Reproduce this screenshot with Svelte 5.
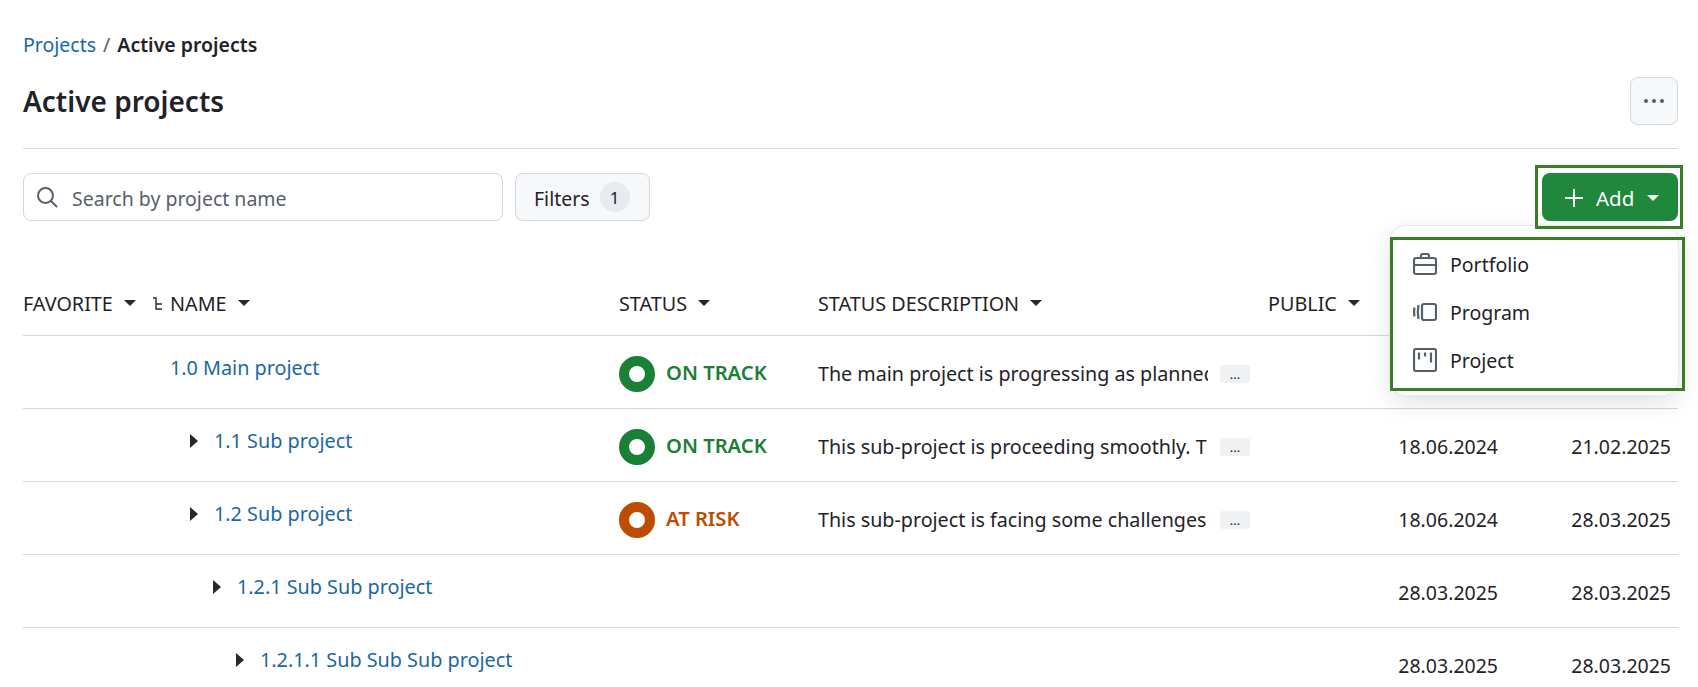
<script>
  const rows = [
    { name: "1.0 Main project", depth: 0, leaf: true, status: "ON TRACK", kind: "ok", desc: "The main project is progressing as planned", start: "", end: "" },
    { name: "1.1 Sub project", depth: 1, status: "ON TRACK", kind: "ok", desc: "This sub-project is proceeding smoothly. The team", start: "18.06.2024", end: "21.02.2025" },
    { name: "1.2 Sub project", depth: 1, status: "AT RISK", kind: "risk", desc: "This sub-project is facing some challenges that", start: "18.06.2024", end: "28.03.2025" },
    { name: "1.2.1 Sub Sub project", depth: 2, status: "", kind: "", desc: "", start: "28.03.2025", end: "28.03.2025" },
    { name: "1.2.1.1 Sub Sub Sub project", depth: 3, status: "", kind: "", desc: "", start: "28.03.2025", end: "28.03.2025" },
  ];
  const headers = [
    { label: "STATUS" },
    { label: "STATUS DESCRIPTION" },
    { label: "PUBLIC" },
  ];
</script>

<div class="page">
  <nav class="crumbs">
    <a href="#projects">Projects</a>
    <span class="sep">/</span>
    <strong>Active projects</strong>
  </nav>

  <header class="title-bar">
    <h1>Active projects</h1>
    <button class="more" aria-label="More">
      <svg width="22" height="6" viewBox="0 0 22 6"><circle cx="3" cy="3" r="2"/><circle cx="11" cy="3" r="2"/><circle cx="19" cy="3" r="2"/></svg>
    </button>
  </header>

  <div class="toolbar">
    <label class="search">
      <svg width="24" height="24" viewBox="0 0 24 24" fill="none" stroke="#57606a" stroke-width="2" stroke-linecap="round"><circle cx="10.500" cy="10.500" r="7.500"/><path d="M16 16l5.500 5.500"/></svg>
      <input placeholder="Search by project name" />
    </label>
    <button class="filters">Filters <span class="count">1</span></button>
    <div class="spacer"></div>
    <div class="add-wrap">
      <button class="add">
        <svg width="18" height="18" viewBox="0 0 18 18" stroke="#fff" stroke-width="2"><path d="M9 0v18M0 9h18"/></svg>
        <span>Add</span>
        <i class="caret white"></i>
      </button>
      <div class="mark add-mark"></div>
      <div class="menu">
        <div class="item">
          <svg width="24" height="24" viewBox="0 0 24 24" fill="none" stroke="#57606a" stroke-width="2.200"><rect x="1" y="6" width="22" height="16" rx="2"/><path d="M1 13h22M8 6V3.500a1.500 1.500 0 0 1 1.500-1.500h5a1.500 1.500 0 0 1 1.500 1.500V6"/></svg>
          Portfolio
        </div>
        <div class="item">
          <svg width="24" height="24" viewBox="0 0 24 24" fill="none" stroke="#57606a" stroke-width="2.200"><rect x="9" y="4" width="14" height="16" rx="2"/><path d="M5.500 5c-.8 4-.8 10 0 14"/><path d="M1.500 7.500c-.5 3-.5 6 0 9"/></svg>
          Program
        </div>
        <div class="item">
          <svg width="24" height="24" viewBox="0 0 24 24" fill="none" stroke="#57606a" stroke-width="2.200"><rect x="1" y="1" width="22" height="22" rx="2"/><path d="M6 4.500v7M12 4.500v4M18 4.500v10"/></svg>
          Project
        </div>
        <div class="mark menu-mark"></div>
      </div>
    </div>
  </div>

  <div class="table">
    <div class="row head">
      <div class="cell fav">FAVORITE <i class="caret"></i></div>
      <div class="cell name-head">
        <svg class="tree" width="11" height="13" viewBox="0 0 11 13" fill="none" stroke="#24292f" stroke-width="1.400"><path d="M1 1h3v11h6M4 7h6"/></svg>
        NAME <i class="caret"></i>
      </div>
      {#each headers as h}
        <div class="cell">{h.label} <i class="caret"></i></div>
      {/each}
      <div class="cell"></div>
      <div class="cell"></div>
    </div>

    {#each rows as r}
      <div class="row">
        <div class="cell"></div>
        <div class="cell name depth-{r.depth}">
          {#if !r.leaf}<i class="expander"></i>{/if}
          <a href="#project">{r.name}</a>
        </div>
        <div class="cell status {r.kind}">
          {#if r.status}
            <i class="ring"></i><span class="label">{r.status}</span>
          {/if}
        </div>
        <div class="cell desc">
          {#if r.desc}
            <span class="clip">{r.desc}</span>
            <span class="ell">...</span>
          {/if}
        </div>
        <div class="cell"></div>
        <div class="cell date">{r.start}</div>
        <div class="cell date end">{r.end}</div>
      </div>
    {/each}
  </div>
</div>

<style>
  :global(body) {
    margin: 0;
    background: #fff;
    overflow: hidden;
  }

  .page {
    box-sizing: border-box;
    height: 687px;
    overflow: hidden;
    padding: 32px 20px 0 23px;
    font-family: "Noto Sans", sans-serif;
    font-size: 19.5px;
    color: #1f2328;
  }

  a {
    color: #1a67a3;
    text-decoration: none;
  }

  .crumbs {
    display: flex;
    gap: 7px;
    height: 26px;
    line-height: 26px;
  }

  .crumbs strong {
    font-weight: 600;
  }

  .sep {
    color: #57606a;
  }

  .title-bar {
    display: flex;
    justify-content: space-between;
    align-items: center;
    height: 46px;
    margin-top: 20px;
    padding-bottom: 24px;
    border-bottom: 1px solid #d8dee4;
  }

  h1 {
    margin: 0;
    font-size: 28px;
    font-weight: 600;
  }

  .more {
    display: flex;
    align-items: center;
    justify-content: center;
    width: 48px;
    height: 48px;
    padding: 0;
    border: 1px solid #d0d7de;
    border-radius: 8px;
    background: #f6f8fa;
  }

  .more svg {
    fill: #57606a;
  }

  .toolbar {
    display: flex;
    align-items: center;
    gap: 12px;
    height: 48px;
    margin-top: 24px;
  }

  .spacer {
    flex: 1;
  }

  .search {
    box-sizing: border-box;
    display: flex;
    align-items: center;
    gap: 13px;
    width: 480px;
    height: 48px;
    padding: 0 11px;
    border: 1px solid #d0d7de;
    border-radius: 8px;
  }

  .search input {
    flex: 1;
    border: 0;
    outline: 0;
    padding: 2px 0 0;
    font: inherit;
  }

  .search input::placeholder {
    color: #57606a;
    opacity: 1;
  }

  .filters {
    display: flex;
    align-items: center;
    gap: 10px;
    box-sizing: border-box;
    width: 135px;
    height: 48px;
    padding: 2px 18px 0;
    border: 1px solid #d0d7de;
    border-radius: 8px;
    background: #f6f8fa;
    font: inherit;
    color: inherit;
  }

  .count {
    display: inline-flex;
    align-items: center;
    justify-content: center;
    width: 30px;
    height: 30px;
    margin-top: -2px;
    border-radius: 50%;
    background: #e7eaee;
    font-size: 17px;
  }

  .add-wrap {
    position: relative;
  }

  .add {
    display: flex;
    align-items: center;
    gap: 13px;
    width: 136px;
    height: 48px;
    padding: 1px 0 0 23px;
    border: 0;
    border-radius: 8px;
    background: #1f883d;
    color: #fff;
    font: inherit;
    font-size: 20.500px;
  }

  .add svg {
    flex-shrink: 0;
  }

  .mark {
    position: absolute;
    box-sizing: border-box;
    border: 3px solid #3a7d22;
    pointer-events: none;
  }

  .add-mark {
    top: -8px;
    left: -7px;
    width: 148px;
    height: 64px;
    z-index: 3;
  }

  .menu {
    position: absolute;
    top: 53px;
    right: 0;
    box-sizing: border-box;
    width: 288px;
    height: 169px;
    padding: 14px 0 0 23px;
    border-radius: 16px;
    background: #fff;
    box-shadow: 0 0 0 1px #e6e9ed, 0 8px 24px rgba(100, 110, 125, 0.2);
    z-index: 2;
  }

  .menu-mark {
    top: 11px;
    left: 0;
    width: 295px;
    height: 154px;
  }

  .item {
    display: flex;
    align-items: center;
    gap: 13px;
    height: 48px;
  }

  .table {
    margin-top: 34px;
  }

  .row {
    display: grid;
    grid-template-columns: 147px 449px 199px 450px 130px 100px 180px;
    height: 72px;
    border-bottom: 1px solid #d0d7de;
    font-size: 19.800px;
  }

  .row.head {
    height: 80px;
  }

  .cell {
    display: flex;
    align-items: center;
    white-space: nowrap;
    min-width: 0;
  }

  .head .cell {
    gap: 8px;
    padding-top: 16px;
    color: #1f2328;
  }

  .fav {
    position: relative;
  }

  .name-head {
    position: relative;
  }

  .tree {
    position: absolute;
    left: -18px;
  }

  .caret {
    display: inline-block;
    width: 0;
    height: 0;
    margin-left: 3px;
    border-left: 6px solid transparent;
    border-right: 6px solid transparent;
    border-top: 6px solid #24292f;
  }

  .caret.white {
    border-top-color: #fff;
    margin-left: 0;
  }

  .name {
    padding-bottom: 9px;
    position: relative;
  }

  .depth-1 { padding-left: 44px; }
  .depth-2 { padding-left: 67px; }
  .depth-3 { padding-left: 90px; }

  .expander {
    position: absolute;
    margin-left: -24px;
    width: 0;
    height: 0;
    border-top: 7px solid transparent;
    border-bottom: 7px solid transparent;
    border-left: 8px solid #24292f;
  }

  .status {
    gap: 11px;
    font-weight: 600;
    padding-top: 3px;
  }

  .label {
    margin-bottom: 3px;
    font-size: 20.200px;
  }

  .ring {
    box-sizing: border-box;
    width: 36px;
    height: 36px;
    border-radius: 50%;
    border: 10px solid currentColor;
  }

  .ok { color: #1a7f37; }
  .risk { color: #bc4c00; }

  .desc {
    gap: 12px;
    padding-top: 2px;
  }

  .clip {
    overflow: hidden;
    width: 390px;
    font-size: 19.700px;
  }

  .ell {
    display: flex;
    align-items: center;
    justify-content: center;
    width: 30px;
    height: 18px;
    margin-top: 1px;
    border-radius: 3px;
    background: #eff1f3;
    font-size: 13px;
  }

  .date {
    justify-content: flex-end;
    padding-top: 2px;
    font-size: 19.500px;
  }

  .date.end {
    padding-right: 7px;
  }
</style>
